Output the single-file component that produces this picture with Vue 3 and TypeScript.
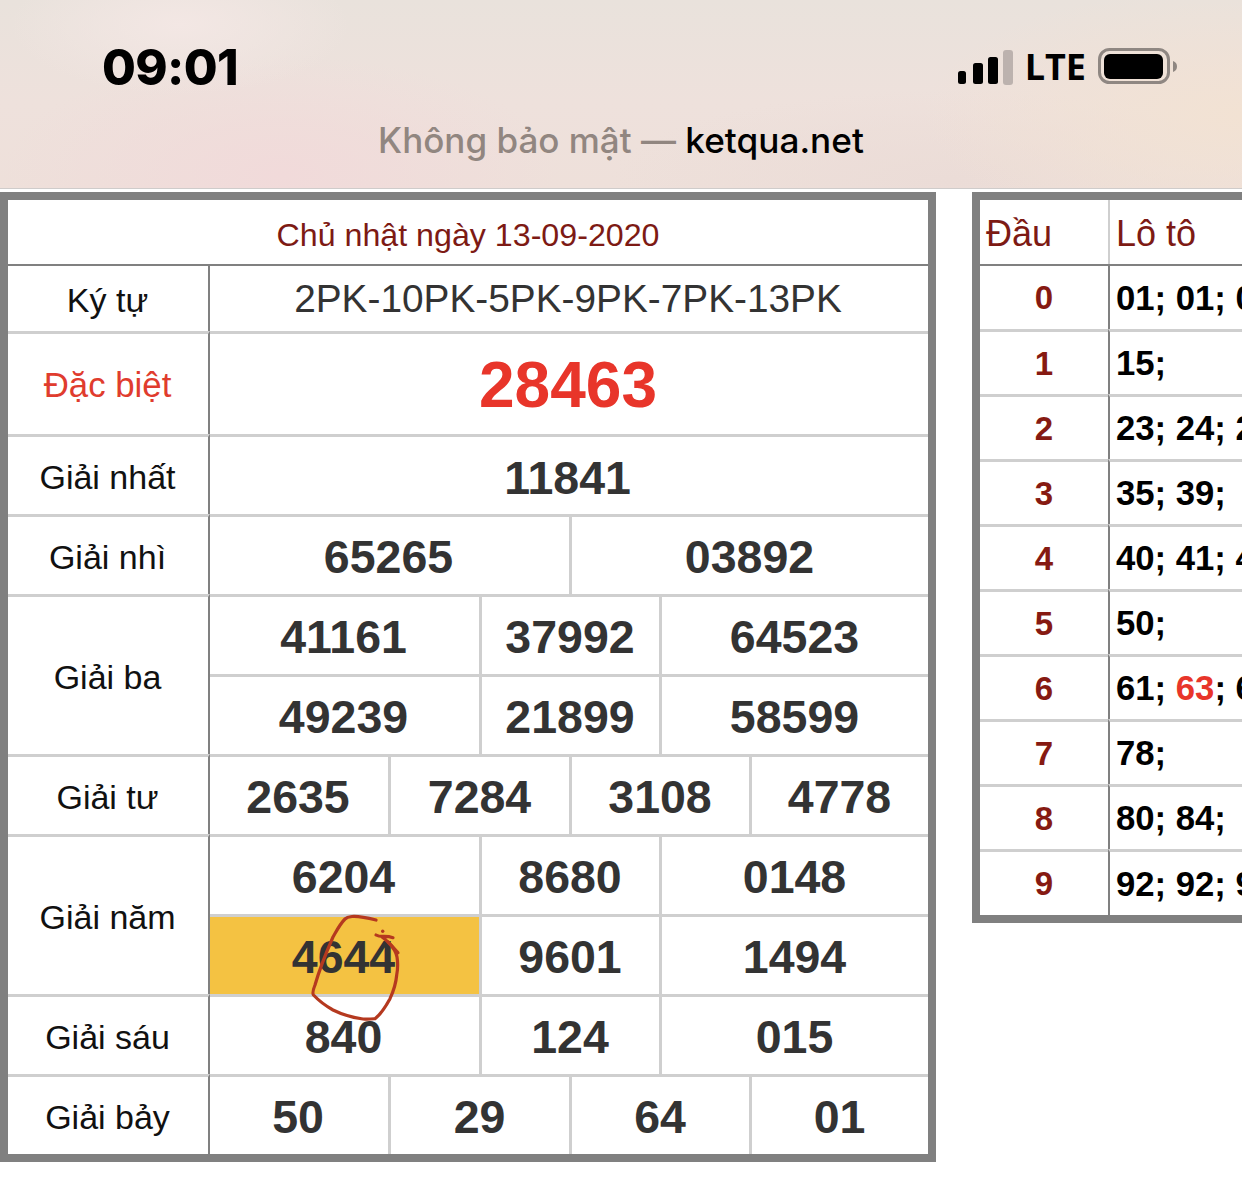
<script setup lang="ts">
interface Cell { text: string; span: number; cls?: string }
interface Row { label?: string; labelSpan?: number; labelCls?: string; height: number; cells: Cell[] }

const three = (a: string, b: string, c: string, hl = false): Cell[] => [
  { text: a, span: 3, cls: hl ? 'hl' : '' },
  { text: b, span: 2 },
  { text: c, span: 3 },
]
const four = (a: string, b: string, c: string, d: string): Cell[] =>
  [a, b, c, d].map((text) => ({ text, span: 2 }))

const rows: Row[] = [
  { label: 'Đặc biệt', labelCls: 'red', height: 103, cells: [{ text: '28463', span: 8, cls: 'special' }] },
  { label: 'Giải nhất', height: 80, cells: [{ text: '11841', span: 8, cls: 'wide' }] },
  { label: 'Giải nhì', height: 80, cells: [{ text: '65265', span: 4 }, { text: '03892', span: 4 }] },
  { label: 'Giải ba', labelSpan: 2, height: 80, cells: three('41161', '37992', '64523') },
  { height: 80, cells: three('49239', '21899', '58599') },
  { label: 'Giải tư', height: 80, cells: four('2635', '7284', '3108', '4778') },
  { label: 'Giải năm', labelSpan: 2, height: 80, cells: three('6204', '8680', '0148') },
  { height: 80, cells: three('4644', '9601', '1494', true) },
  { label: 'Giải sáu', height: 80, cells: three('840', '124', '015') },
  { label: 'Giải bảy', height: 80, cells: four('50', '29', '64', '01') },
]
const gridRows = ['64px', '67px', ...rows.map((r) => r.height + 'px')].join(' ')

interface Lo { head: string; parts: { t: string; red?: boolean }[] }
const lo: Lo[] = [
  { head: '0', parts: [{ t: '01; 01; 0' }] },
  { head: '1', parts: [{ t: '15;' }] },
  { head: '2', parts: [{ t: '23; 24; 2' }] },
  { head: '3', parts: [{ t: '35; 39;' }] },
  { head: '4', parts: [{ t: '40; 41; 4' }] },
  { head: '5', parts: [{ t: '50;' }] },
  { head: '6', parts: [{ t: '61; ' }, { t: '63', red: true }, { t: '; 6' }] },
  { head: '7', parts: [{ t: '78;' }] },
  { head: '8', parts: [{ t: '80; 84;' }] },
  { head: '9', parts: [{ t: '92; 92; 9' }] },
]
</script>

<template>
  <div class="page">
    <header class="top">
      <div class="status">
        <span class="time">09:01</span>
        <div class="indicators">
          <svg class="signal" width="42" height="36" viewBox="0 0 42 36">
            <rect x="0" y="22" width="8" height="13" rx="2.5" fill="#000" />
            <rect x="15" y="14" width="10" height="21" rx="2.5" fill="#000" />
            <rect x="30" y="8" width="10" height="27" rx="2.5" fill="#000" />
          </svg>
          <span class="signal-off"></span>
          <span class="lte">LTE</span>
          <svg class="battery" width="80" height="38" viewBox="0 0 80 38">
            <rect x="1.5" y="1.5" width="69" height="33" rx="10" fill="none" stroke="#8f8782" stroke-width="3" />
            <rect x="6" y="6" width="59" height="25" rx="6" fill="#000" />
            <path d="M75 13 C78 14 79 16 79 18.5 C79 21 78 23 75 24 Z" fill="#8f8782" />
          </svg>
        </div>
      </div>
      <div class="address"><span class="insecure">Không bảo mật — </span><span class="domain">ketqua.net</span></div>
    </header>

    <main class="content">
      <section class="results" :style="{ gridTemplateRows: gridRows }">
        <div class="date">Chủ nhật ngày 13-09-2020</div>
        <div class="label first">Ký tự</div>
        <div class="code first">2PK-10PK-5PK-9PK-7PK-13PK</div>
        <template v-for="(row, i) in rows" :key="i">
          <div v-if="row.label" class="label" :class="row.labelCls" :style="{ gridRow: 'span ' + (row.labelSpan ?? 1) }">{{ row.label }}</div>
          <div
            v-for="(cell, j) in row.cells"
            :key="j"
            class="num"
            :class="[cell.cls, { lead: j === 0 }]"
            :style="{ gridColumn: 'span ' + cell.span }"
          >{{ cell.text }}<svg v-if="cell.cls === 'hl'" class="scribble" width="100" height="110" viewBox="0 0 100 110">
              <path d="M66 7 C58 5 48 3 42 3.5 C38 4 36 5 35 6 C30 11 27 17 23 24 C16 40 9 58 5 72 C3 77 2 80 3.5 82 C10 89 16 93 23 97 C33 102 45 105 53 106 C58 106.5 62 106 65 105.7 C71 101 76 93 80 85.7 C84 77 86 70 86.7 62 C88 55 88 50 87 44 C86 38 82 33 78 29" fill="none" stroke="#b5391f" stroke-width="3.2" stroke-linecap="round" />
              <path d="M66 22 C71 25 75 22 83 24.7 M72 24 C78 28 83 34 88 39.7" fill="none" stroke="#b5391f" stroke-width="3.2" stroke-linecap="round" />
              <circle cx="72.7" cy="18.3" r="1.7" fill="#b5391f" />
            </svg></div>
        </template>
      </section>

      <section class="loto">
        <div class="lhead lh-first">Đầu</div>
        <div class="lhead lh-second">Lô tô</div>
        <template v-for="(item, i) in lo" :key="item.head">
          <div class="ldigit" :class="{ 'row-one': i === 0 }">{{ item.head }}</div>
          <div class="lvals" :class="{ 'row-one': i === 0 }"><template v-for="(p, k) in item.parts" :key="k"><span :class="{ 'red-num': p.red }">{{ p.t }}</span></template></div>
        </template>
      </section>
    </main>
  </div>
</template>

<style>
html, body { margin: 0; background: #fff; }
</style>

<style scoped>
.page {
  width: 1242px;
  height: 1182px;
  overflow: hidden;
  background: #fff;
  font-family: "Liberation Sans", Arial, sans-serif;
}
.top {
  height: 188px;
  box-sizing: content-box;
  border-bottom: 1px solid #cfcccb;
  background:
    radial-gradient(170px 70px at 180px 25px, #f3e7e4 0%, rgba(243, 231, 228, 0) 100%),
    radial-gradient(280px 120px at 280px 175px, #f1dada 0%, rgba(241, 218, 218, 0) 100%),
    radial-gradient(320px 130px at 1242px 115px, #f2e2d3 0%, rgba(242, 226, 211, 0) 100%),
    radial-gradient(340px 90px at 950px 180px, #ebdcd7 0%, rgba(235, 220, 215, 0) 100%),
    linear-gradient(180deg, #e9e2dc 0%, #eee1dc 55%, #eee0da 100%);
}
.status {
  height: 112px;
  display: flex;
  align-items: center;
  justify-content: space-between;
  padding: 22px 64px 0 102px;
  box-sizing: border-box;
}
.time {
  font-family: Inter, sans-serif;
  font-weight: 800;
  font-size: 49px;
  color: #000;
  letter-spacing: -0.6px;
  line-height: 1;
}
.indicators { display: flex; align-items: center; }
.signal { display: block; }
.signal-off {
  width: 10px;
  height: 35px;
  margin-left: 3px;
  border-radius: 3px;
  background: #bcb2ae;
}
.lte {
  margin-left: 12px;
  font-family: "Open Sans", sans-serif;
  font-weight: 700;
  font-size: 36px;
  line-height: 1;
  color: #000;
}
.battery { margin-left: 12px; }
.address {
  text-align: center;
  font-family: Inter, sans-serif;
  font-size: 35px;
  line-height: 40px;
  font-weight: 500;
  margin-top: 8px;
}
.insecure { color: #918680; }
.domain { color: #000; font-size: 35.2px; }

.content {
  display: flex;
  align-items: flex-start;
  padding-top: 3px;
  width: 1500px;
}
.results {
  width: 936px;
  height: 970px;
  box-sizing: border-box;
  border: 8px solid #808080;
  display: grid;
  grid-template-columns: 202px 89px 89px 91px 90px 90px 90px 90px 89px;
  color: #333;
}
.date {
  grid-column: 1 / -1;
  display: flex;
  align-items: center;
  justify-content: center;
  color: #7d1a14;
  font-size: 32.2px;
  padding-top: 6px;
}
.label, .code, .num {
  box-sizing: border-box;
  border-top: 3px solid #cfcfcf;
  display: flex;
  align-items: center;
  justify-content: center;
}
.label {
  font-size: 34px;
  color: #111;
  border-right: 2px solid #808080;
  padding: 4px 1px 0 0;
}
.label.red { color: #e03c2e; font-size: 34.8px; padding-top: 2px; }
.label.first, .code.first { border-top-color: #808080; border-top-width: 2px; }
.code {
  grid-column: span 8;
  font-size: 38.8px;
  color: #333;
  padding-right: 2px;
}
.num {
  position: relative;
  font-size: 46.5px;
  font-weight: 700;
  border-left: 3px solid #cfcfcf;
  padding: 2px 1px 0 0;
}
.num.lead { border-left: 0; padding-right: 2px; }
.num.wide { padding: 5px 3px 0 0; }
.num.special { color: #e8352a; font-size: 64px; padding: 2px 2px 0 0; }
.hl { background: #f4c242; }
.scribble {
  position: absolute;
  left: 100px;
  top: -4px;
  z-index: 1;
}
.loto {
  margin-left: 36px;
  width: 400px;
  height: 731px;
  box-sizing: border-box;
  border: 8px solid #808080;
  border-right: 0;
  display: grid;
  grid-template-columns: 128px 272px;
  grid-template-rows: 64px repeat(9, 65px) 66px;
}
.lhead {
  display: flex;
  align-items: center;
  color: #7d1a14;
  font-size: 36px;
  padding-top: 4px;
}
.lh-first { padding-left: 6px; }
.lh-second { padding-left: 6px; border-left: 2px solid #cfcfcf; }
.ldigit, .lvals {
  box-sizing: border-box;
  border-top: 3px solid #cfcfcf;
  display: flex;
  align-items: center;
  font-weight: 700;
  padding-top: 1px;
}
.row-one { border-top-color: #808080; border-top-width: 2px; }
.ldigit { justify-content: center; color: #861a12; font-size: 33px; }
.lvals {
  border-left: 2px solid #808080;
  padding-left: 6px;
  color: #000;
  font-size: 34.7px;
  white-space: pre;
  overflow: hidden;
}
.red-num { color: #e8352a; }
</style>
